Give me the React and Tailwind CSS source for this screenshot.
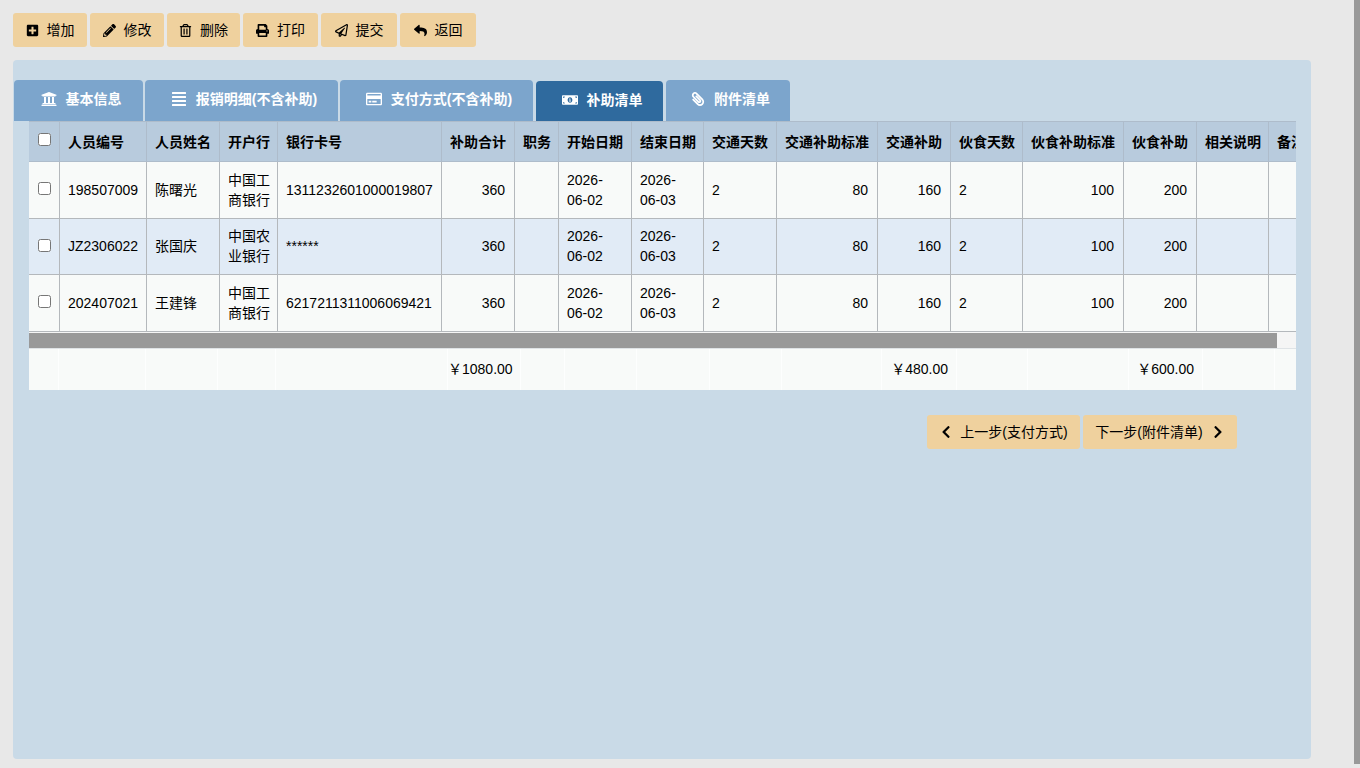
import React from "react";
import {
  FaPlusSquare,
  FaPencilAlt,
  FaRegTrashAlt,
  FaPrint,
  FaRegPaperPlane,
  FaReply,
  FaUniversity,
  FaAlignJustify,
  FaRegCreditCard,
  FaMoneyBillAlt,
  FaPaperclip,
  FaChevronLeft,
  FaChevronRight,
} from "react-icons/fa";

const toolbar = [
  { label: "增加", icon: FaPlusSquare, width: "w-[74px]" },
  { label: "修改", icon: FaPencilAlt, width: "w-[74px]" },
  { label: "删除", icon: FaRegTrashAlt, width: "w-[73px]" },
  { label: "打印", icon: FaPrint, width: "w-[75px]" },
  { label: "提交", icon: FaRegPaperPlane, width: "w-[76px]" },
  { label: "返回", icon: FaReply, width: "w-[76px]" },
];

const tabs = [
  { label: "基本信息", icon: FaUniversity, width: "w-[129px]" },
  { label: "报销明细(不含补助)", icon: FaAlignJustify, width: "w-[193px]" },
  { label: "支付方式(不含补助)", icon: FaRegCreditCard, width: "w-[193px]" },
  { label: "补助清单", icon: FaMoneyBillAlt, width: "w-[127px] ml-px", active: true },
  { label: "附件清单", icon: FaPaperclip, width: "w-[124px] ml-px", flip: true },
];

const headers = [
  "人员编号",
  "人员姓名",
  "开户行",
  "银行卡号",
  "补助合计",
  "职务",
  "开始日期",
  "结束日期",
  "交通天数",
  "交通补助标准",
  "交通补助",
  "伙食天数",
  "伙食补助标准",
  "伙食补助",
  "相关说明",
  "备注",
];

const rows = [
  { id: "198507009", name: "陈曙光", bank: "中国工商银行", card: "1311232601000019807", start: "2026-06-02", end: "2026-06-03" },
  { id: "JZ2306022", name: "张国庆", bank: "中国农业银行", card: "******", start: "2026-06-02", end: "2026-06-03", alt: true },
  { id: "202407021", name: "王建锋", bank: "中国工商银行", card: "6217211311006069421", start: "2026-06-02", end: "2026-06-03" },
];

const mainCols = [31, 87, 73, 58, 164, 73, 44, 73, 72, 73, 101, 73, 72, 101, 73, 72, 60];
const footCols = [30, 87, 72, 58, 172, 73, 44, 72, 73, 72, 100, 75, 71, 101, 74, 72, 60];
const footValues = { 5: "￥1080.00", 11: "￥480.00", 14: "￥600.00" };

const cell = "border-r border-b border-[#b4b8bc] px-2 text-sm text-black";
const numCell = "border-r border-b border-[#b4b8bc] pl-2 pr-[9px] text-right text-sm text-black";
const headCell = "border-r border-b border-[#aebccb] px-2 text-left text-sm font-bold text-black whitespace-nowrap overflow-hidden";

const Check = ({ className }) => (
  <input type="checkbox" className={`block h-[13px] w-[13px] mx-auto ${className}`} />
);

const App = () => {
  return (
    <div className="h-[768px] w-[1360px] overflow-hidden bg-[#e8e8e8] font-['Liberation_Sans','Noto_Sans_CJK_SC',sans-serif] relative">
      <div className="absolute right-0 top-0 h-[764px] w-[6px] bg-[#999999]" />
      <div className="flex gap-[3px] pl-[13px] pt-[13px]">
        {toolbar.map((b) => (
          <button
            key={b.label}
            className={`${b.width} flex h-[34px] items-center justify-center gap-[8px] rounded-[3px] bg-[#efd19e] text-sm text-black`}
          >
            <b.icon className="h-[13px] w-[13px]" />
            {b.label}
          </button>
        ))}
      </div>

      <div className="ml-[13px] mt-[13px] h-[699px] w-[1298px] rounded-[4px] bg-[#c9dae7] pt-[20px]">
        <div className="ml-px flex h-[41px] items-end gap-[2px]">
          {tabs.map((t) => (
            <div
              key={t.label}
              className={`${t.width} ${t.active ? "h-[40px] bg-[#2f6a9e]" : "h-[41px] bg-[#7ca5cc]"} flex items-center justify-center gap-[9px] rounded-t-[4px] pb-[3px] pl-[5px] text-sm font-bold text-white`}
            >
              <t.icon className={t.flip ? "h-[14px] w-[14px] -scale-x-100" : "h-[16px] w-[16px]"} />
              {t.label}
            </div>
          ))}
        </div>

        <div className="ml-4 w-[1267px] overflow-hidden">
          <table className="table-fixed border-separate border-spacing-0 w-[1300px]">
            <colgroup>
              {mainCols.map((w, i) => (
                <col key={i} style={{ width: w }} />
              ))}
            </colgroup>
            <thead>
              <tr className="h-[41px] bg-[#b8cbdd]">
                <th className="border-r border-b border-t border-[#aebccb]">
                  <Check className="-translate-y-[2px]" />
                </th>
                {headers.map((h) => (
                  <th key={h} className={`${headCell} border-t`}>
                    {h}
                  </th>
                ))}
              </tr>
            </thead>
            <tbody>
              {rows.map((r) => (
                <tr key={r.id} className={`h-[56.5px] ${r.alt ? "bg-[#e1ebf6]" : "bg-[#f8faf9]"}`}>
                  <td className={cell}>
                    <Check className="-translate-y-px" />
                  </td>
                  <td className={cell}>{r.id}</td>
                  <td className={cell}>{r.name}</td>
                  <td className={`${cell} pr-0 leading-5`}>{r.bank}</td>
                  <td className={cell}>{r.card}</td>
                  <td className={numCell}>360</td>
                  <td className={cell}></td>
                  <td className={`${cell} leading-5`}>{r.start}</td>
                  <td className={`${cell} leading-5`}>{r.end}</td>
                  <td className={cell}>2</td>
                  <td className={numCell}>80</td>
                  <td className={numCell}>160</td>
                  <td className={cell}>2</td>
                  <td className={numCell}>100</td>
                  <td className={numCell}>200</td>
                  <td className={cell}></td>
                  <td className={cell}></td>
                </tr>
              ))}
            </tbody>
          </table>

          <div className="h-[17px] border-b border-[#dfe3e6] bg-[#f5f5f5] pt-px">
            <div className="h-[15px] w-[1248px] bg-[#999999]" />
          </div>

          <table className="table-fixed border-separate border-spacing-0 w-[1306px]">
            <colgroup>
              {footCols.map((w, i) => (
                <col key={i} style={{ width: w }} />
              ))}
            </colgroup>
            <tbody>
              <tr className="h-[41px] bg-[#f8faf9]">
                {footCols.map((w, i) => (
                  <td key={i} className="border-r border-[#fdfefe] pr-2 text-right text-sm text-black">
                    {footValues[i] || ""}
                  </td>
                ))}
              </tr>
            </tbody>
          </table>
        </div>

        <div className="ml-[914px] mt-[25px] flex gap-[3px]">
          <button className="flex h-[34px] w-[153px] items-center justify-center gap-[7px] rounded-[3px] bg-[#efd19e] text-sm text-black">
            <FaChevronLeft className="h-[14px] w-[14px]" />
            上一步(支付方式)
          </button>
          <button className="flex h-[34px] w-[154px] items-center justify-center gap-[8px] rounded-[3px] bg-[#efd19e] text-sm text-black">
            下一步(附件清单)
            <FaChevronRight className="h-[14px] w-[14px]" />
          </button>
        </div>
      </div>
    </div>
  );
};

export default App;
